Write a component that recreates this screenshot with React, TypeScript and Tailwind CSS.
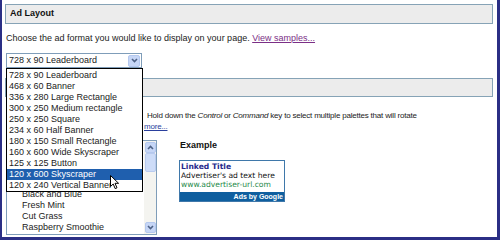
import React from 'react';

const formats = [
  '728 x 90 Leaderboard',
  '468 x 60 Banner',
  '336 x 280 Large Rectangle',
  '300 x 250 Medium rectangle',
  '250 x 250 Square',
  '234 x 60 Half Banner',
  '180 x 150 Small Rectangle',
  '160 x 600 Wide Skyscraper',
  '125 x 125 Button',
  '120 x 600 Skyscraper',
  '120 x 240 Vertical Banner',
];

const palettes = [
  'Open Air',
  'Seaside',
  'Shadow',
  'Graphite',
  'Black and Blue',
  'Fresh Mint',
  'Cut Grass',
  'Raspberry Smoothie',
];

function Chevron({ up = false }: { up?: boolean }) {
  return (
    <svg width="7" height="5" viewBox="0 0 7 5" className={up ? 'rotate-180' : ''}>
      <path d="M1 1 L3.5 3.5 L6 1" fill="none" stroke="#4d6185" strokeWidth="1.6" />
    </svg>
  );
}

export default function App() {
  return (
    <div className="w-[500px] h-[240px] bg-white border-l-2 border-r-[3px] border-b-[3px] border-[#2b2f85] relative overflow-hidden font-['Liberation_Sans',Arial,sans-serif] text-[9px] text-[#222]">
      <div className="pt-[4px] pl-[3px] pr-[4px]">
        {/* Section header */}
        <div className="h-[20px] border border-[#86a3b6] bg-[#ececec] flex items-center pl-[4px] font-bold text-[9px] text-[#111]">
          Ad Layout
        </div>

        <p className="mt-[9px] ml-[1px] h-[11px] leading-[11px] whitespace-nowrap">
          Choose the ad format you would like to display on your page.{' '}
          <a className="underline text-[#7b2f86]">View samples...</a>
        </p>

        {/* Closed select */}
        <div className="mt-[9px] ml-[1px] w-[136px] h-[15px] border border-[#7f9db9] bg-white flex items-center justify-between">
          <span className="pl-[2px] leading-[13px]">728 x 90 Leaderboard</span>
          <span className="w-[12px] h-[12px] mr-[1px] rounded-[2px] bg-[#c6d6f6] border border-[#b4c8ee] flex items-center justify-center">
            <Chevron />
          </span>
        </div>

        {/* Second header, covered by list */}
        <div className="mt-[10px] h-[19px] border border-[#86a3b6] bg-[#ececec]" />

        <div className="mt-[13px] text-[8px] tracking-[-0.2px] leading-[11px] whitespace-nowrap">
          <p className="pl-[142px]">
            Hold down the <i>Control</i> or <i>Command</i> key to select multiple palettes that will rotate
          </p>
          <p className="pl-[139px]">
            <a className="underline text-[#2a3f9d]">more...</a>
          </p>
        </div>

        <div className="mt-[8px] flex">
          {/* Palette listbox */}
          <div className="ml-[1px] w-[151px] h-[95px] border border-[#7f9db9] bg-white flex">
            <div className="flex-1 flex flex-col justify-end pb-[1px] pl-[15px] overflow-hidden">
              {palettes.map((p) => (
                <div key={p} className="h-[11px] leading-[11px] whitespace-nowrap shrink-0">
                  {p}
                </div>
              ))}
            </div>
            <div className="w-[12px] bg-[#f4f4f0] flex flex-col items-center py-[1px]">
              <div className="w-[11px] h-[11px] rounded-[2px] bg-[#c6d6f6] border border-[#b4c8ee] flex items-center justify-center">
                <Chevron up />
              </div>
              <div className="w-[11px] h-[19px] rounded-[2px] bg-[#cddcf8] border border-[#b9cbef]" />
              <div className="flex-1" />
              <div className="w-[11px] h-[11px] rounded-[2px] bg-[#c6d6f6] border border-[#b4c8ee] flex items-center justify-center">
                <Chevron />
              </div>
            </div>
          </div>

          {/* Example */}
          <div className="ml-[23px]">
            <div className="h-[11px] leading-[11px] font-bold text-[9px] text-[#111]">Example</div>
            <div className="mt-[9px] ml-[-1px] w-[106px] h-[42px] border border-[#3f78aa] bg-white flex flex-col">
              <div className="flex-1 pl-[1px] pt-[1px] font-['DejaVu_Sans',Verdana,sans-serif] text-[7.6px] leading-[9px]">
                <div className="font-bold text-[#262a8c]">Linked Title</div>
                <div className="text-[#111]">Advertiser's ad text here</div>
                <div className="text-[#1f8a4a]">www.advertiser-url.com</div>
              </div>
              <div className="h-[9px] bg-[#0f5f9f] text-white font-bold text-[7px] leading-[9px] text-right pr-[1px]">
                Ads by Google
              </div>
            </div>
          </div>
        </div>
      </div>

      {/* Open dropdown list */}
      <div className="absolute left-[4px] top-[68px] w-[137px] border border-black bg-white pt-[1px]">
        {formats.map((f, i) => (
          <div
            key={f}
            className={
              i === 9
                ? 'h-[11px] leading-[11px] pl-[2px] bg-[#1f5fae] text-white whitespace-nowrap'
                : 'h-[11px] leading-[11px] pl-[2px] whitespace-nowrap'
            }
          >
            {f}
          </div>
        ))}
      </div>

      {/* Mouse pointer */}
      <svg className="absolute left-[108px] top-[175px]" width="10" height="15" viewBox="0 0 10 15">
        <path d="M0.5 0.5 L0.5 11.5 L3.2 9 L5.2 13.6 L7 12.8 L5 8.3 L8.6 8.3 Z" fill="white" stroke="black" strokeWidth="1" />
      </svg>
    </div>
  );
}
